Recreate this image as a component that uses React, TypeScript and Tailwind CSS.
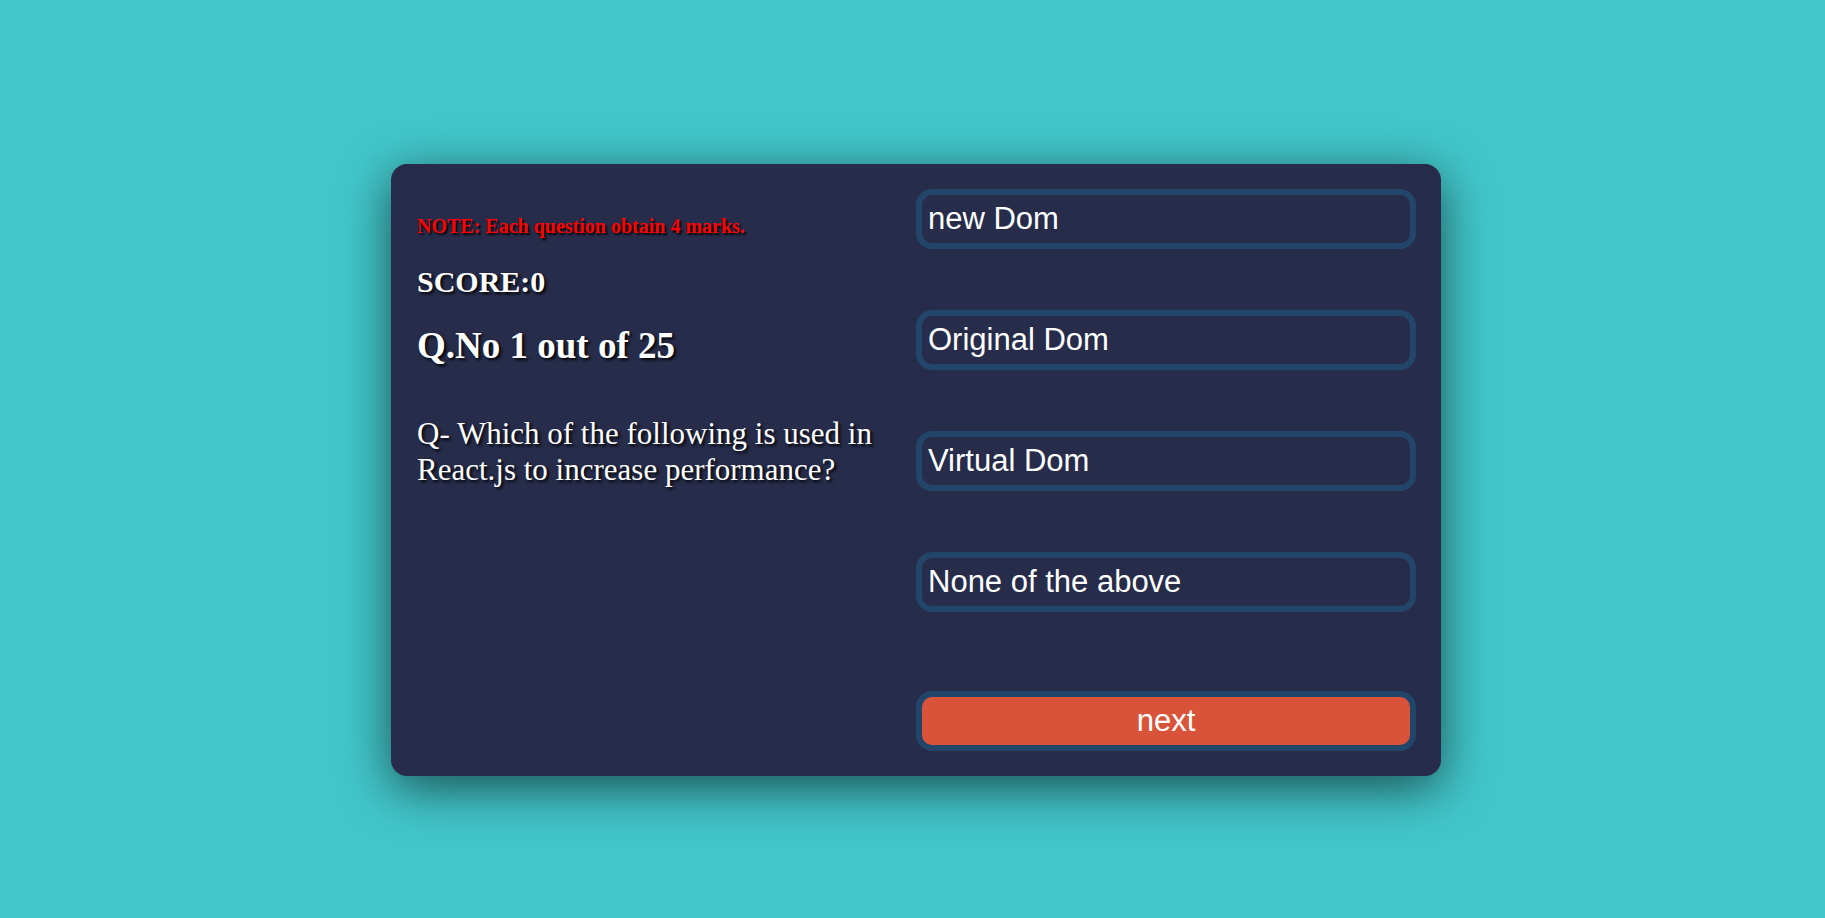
import React from 'react';

const options = ['new Dom', 'Original Dom', 'Virtual Dom', 'None of the above'];

const App: React.FC = () => {
  return (
    <div className="min-h-screen w-full bg-[#42c6ca] pt-[164px] pl-[391px]">
      <div className="w-[1050px] rounded-[16px] bg-[#262c4a] p-[25px] shadow-[0_12px_50px_rgba(0,0,0,0.6)] grid grid-cols-2">
        {/* Left: info + question */}
        <div className="pl-[1px] font-['Liberation_Serif','Times_New_Roman',serif]">
          <div className="mt-[27px] text-[20px] leading-[20px] font-bold text-[#ff0000] [text-shadow:2px_2px_2px_rgba(0,0,0,0.9)]">
            NOTE: Each question obtain 4 marks.
          </div>
          <div className="mt-[31px] text-[30px] leading-[30px] font-bold text-white [text-shadow:2px_2px_3px_rgba(0,0,0,0.95)]">
            SCORE:0
          </div>
          <div className="mt-[30px] text-[37px] leading-[37px] font-bold text-white [text-shadow:2px_2px_3px_rgba(0,0,0,0.95)]">
            Q.No 1 out of 25
          </div>
          <div className="mt-[52px] text-[31px] leading-[36px] text-white [text-shadow:2px_2px_3px_rgba(0,0,0,0.95)]">
            Q- Which of the following is used in React.js to increase performance?
          </div>
        </div>

        {/* Right: options */}
        <div className="flex flex-col font-['Liberation_Sans',Arial,sans-serif]">
          <div className="flex flex-col gap-[61px]">
            {options.map((opt) => (
              <button
                key={opt}
                className="h-[60px] w-full rounded-[16px] border-[6px] border-[#22466a] bg-[#262c4a] pl-[6px] text-left text-[31px] text-white"
              >
                {opt}
              </button>
            ))}
          </div>
          <button className="mt-[79px] h-[60px] w-full rounded-[16px] border-[6px] border-[#22466a] bg-[#d9533a] text-center text-[31px] text-white">
            next
          </button>
        </div>
      </div>
    </div>
  );
};

export default App;
